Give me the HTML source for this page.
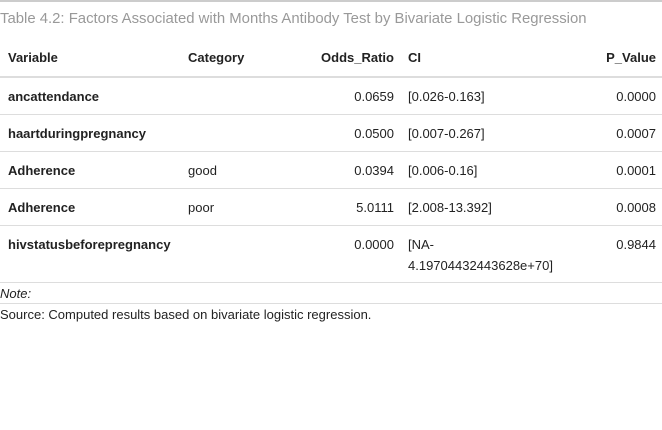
<html><head><style>
body{margin:0;width:662px;height:430px;background:#fff;font-family:"Liberation Sans",sans-serif;color:#222;font-size:13px;position:relative;overflow:hidden}
div{position:absolute;white-space:nowrap}
.l{position:absolute;left:0;width:662px;height:1px;background:#ddd}
.b{font-weight:bold}
.r{text-align:right}
</style></head><body>
<div class="l" style="top:0;height:2px;background:#ccc"></div>
<div style="left:0;top:11px;font-size:14.9px;color:#999">Table 4.2: Factors Associated with Months Antibody Test by Bivariate Logistic Regression</div>
<div class="b" style="left:8px;top:50px">Variable</div>
<div class="b" style="left:188px;top:50px">Category</div>
<div class="b r" style="right:268px;top:50px">Odds_Ratio</div>
<div class="b" style="left:408px;top:50px">CI</div>
<div class="b r" style="right:6px;top:50px">P_Value</div>
<div class="l" style="top:76px;height:2px"></div>

<div class="b" style="left:8px;top:89px">ancattendance</div>
<div class="r" style="right:268px;top:89px">0.0659</div>
<div style="left:408px;top:89px">[0.026-0.163]</div>
<div class="r" style="right:6px;top:89px">0.0000</div>
<div class="l" style="top:114px"></div>

<div class="b" style="left:8px;top:126px">haartduringpregnancy</div>
<div class="r" style="right:268px;top:126px">0.0500</div>
<div style="left:408px;top:126px">[0.007-0.267]</div>
<div class="r" style="right:6px;top:126px">0.0007</div>
<div class="l" style="top:151px"></div>

<div class="b" style="left:8px;top:163px">Adherence</div>
<div style="left:188px;top:163px">good</div>
<div class="r" style="right:268px;top:163px">0.0394</div>
<div style="left:408px;top:163px">[0.006-0.16]</div>
<div class="r" style="right:6px;top:163px">0.0001</div>
<div class="l" style="top:188px"></div>

<div class="b" style="left:8px;top:200px">Adherence</div>
<div style="left:188px;top:200px">poor</div>
<div class="r" style="right:268px;top:200px">5.0111</div>
<div style="left:408px;top:200px">[2.008-13.392]</div>
<div class="r" style="right:6px;top:200px">0.0008</div>
<div class="l" style="top:225px"></div>

<div class="b" style="left:8px;top:237px">hivstatusbeforepregnancy</div>
<div class="r" style="right:268px;top:237px">0.0000</div>
<div style="left:408px;top:237px">[NA-</div>
<div style="left:408px;top:258px">4.19704432443628e+70]</div>
<div class="r" style="right:6px;top:237px">0.9844</div>
<div class="l" style="top:282px"></div>

<div style="left:0;top:286px;font-style:italic">Note:</div>
<div class="l" style="top:303px"></div>
<div style="left:0;top:307px">Source: Computed results based on bivariate logistic regression.</div>
</body></html>
